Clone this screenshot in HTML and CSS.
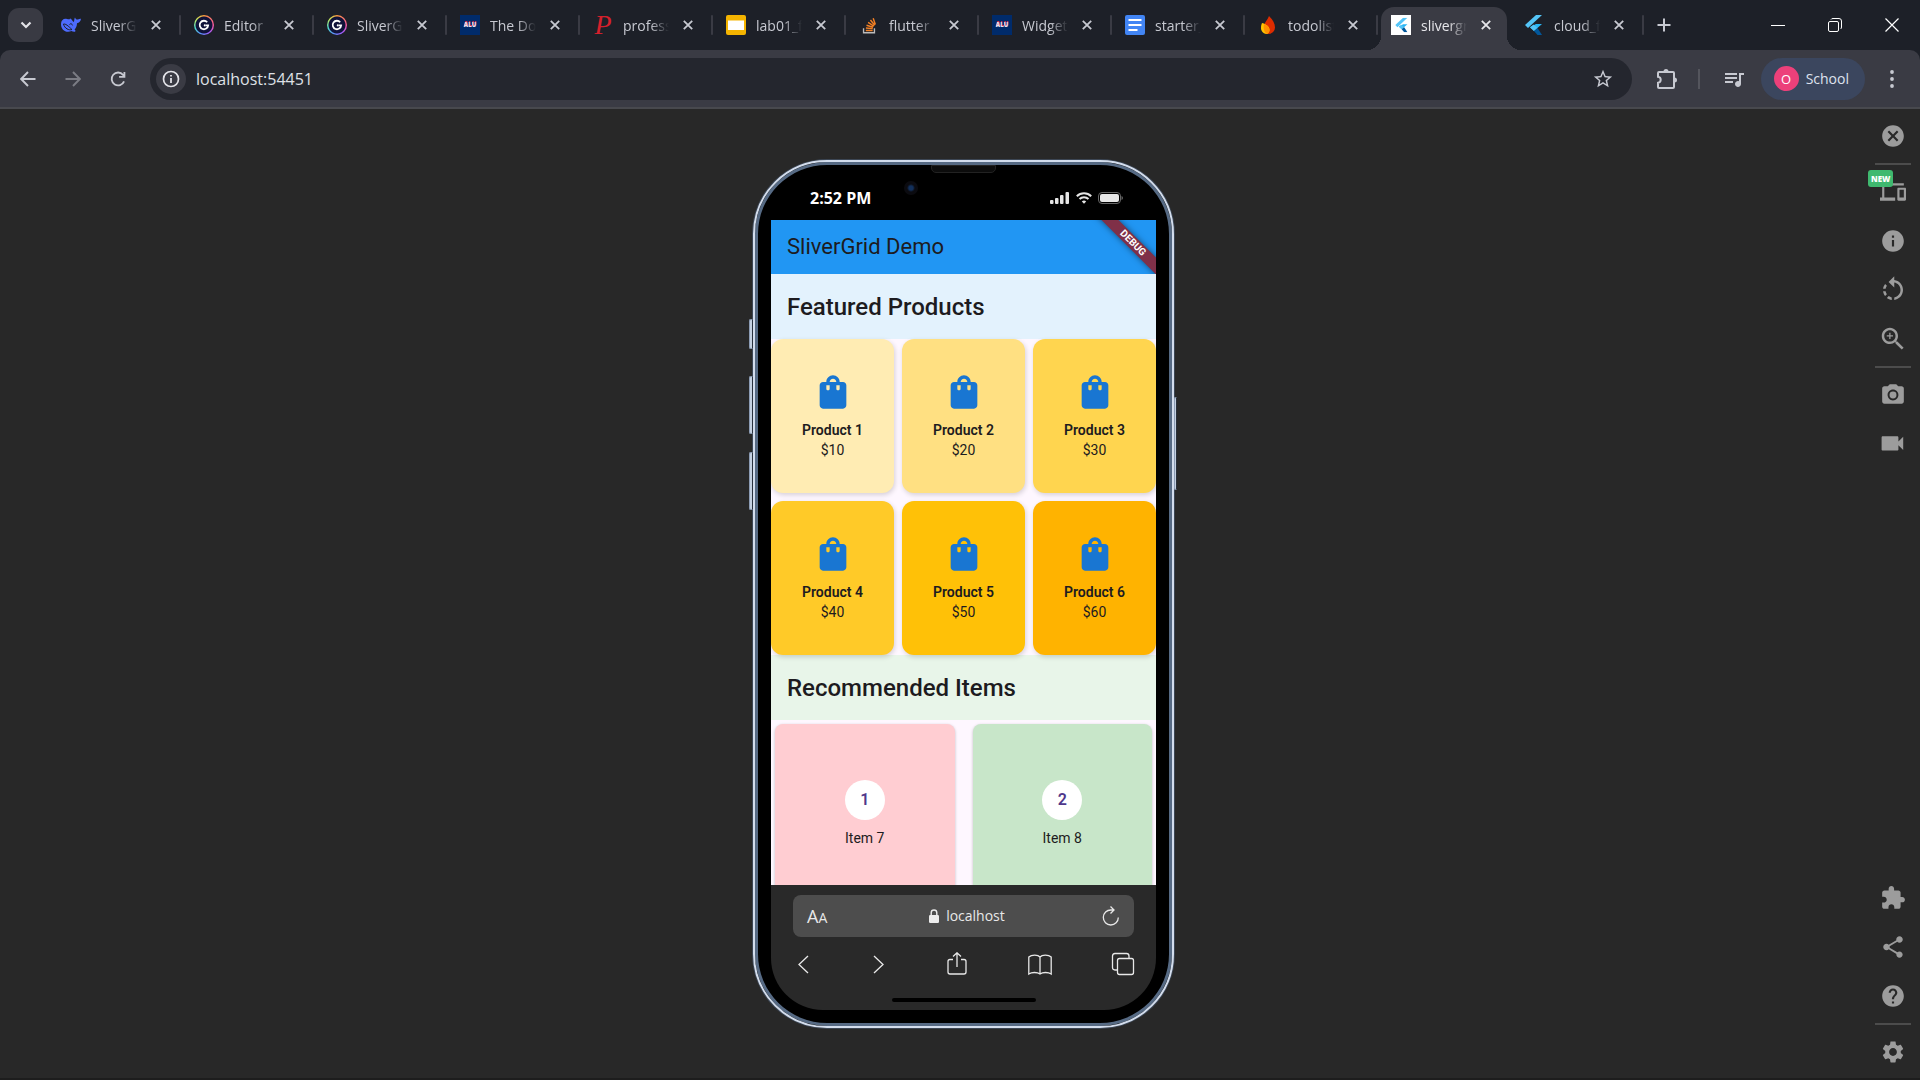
FILE: index.html
```html
<!DOCTYPE html>
<html lang="en">
<head>
<meta charset="utf-8">
<meta name="viewport" content="width=device-width, initial-scale=1">
<title>slivergrid_demo</title>
<link rel="stylesheet" href="styles.css">
</head>
<body>
<svg class="defs" aria-hidden="true">
  <symbol id="i-close" viewBox="0 0 10 10"><path d="M.8.8l8.4 8.4M9.2.8L.8 9.2" fill="none" stroke="currentColor" stroke-width="1.8"/></symbol>
  <symbol id="i-bag" viewBox="0 0 24 24"><path d="M18 6h-2c0-2.21-1.79-4-4-4S8 3.79 8 6H6c-1.1 0-2 .9-2 2v12c0 1.1.9 2 2 2h12c1.1 0 2-.9 2-2V8c0-1.1-.9-2-2-2zm-8 4c0 .55-.45 1-1 1s-1-.45-1-1V8h2v2zm2-6c1.1 0 2 .9 2 2h-4c0-1.1.9-2 2-2zm4 6c0 .55-.45 1-1 1s-1-.45-1-1V8h2v2z"/></symbol>
  <symbol id="i-flutter" viewBox="0 0 20 20"><path d="M12 0h6L4 13l-3-3z" fill="#54c5f8"/><path d="M12 9h6l-8 7-4-4z" fill="#29b6f6"/><path d="M6 12.5l3.500-3 4 3.500L10 16z" fill="#54c5f8"/><path d="M10 16l3.500-3L18 20h-4.500z" fill="#01579b"/></symbol>
</svg>

<header class="browser">
  <div class="tabstrip">
    <button class="tab-search" aria-label="Search tabs"><svg width="12" height="8" viewBox="0 0 12 8"><path d="M1.500 1.500L6 6l4.500-4.500" fill="none" stroke="currentColor" stroke-width="2.200"/></svg></button>
    <nav class="tabs" aria-label="Tabs">
      <div class="tab"><svg class="fav" viewBox="0 0 20 20"><path d="M0 9c0-4 3-6 6-5 2 .6 3 .4 3-.600 1 0 2 1.600 3.500 3.600C13.500 7 13 4 14 2.500c.5 1.500 1.500 2.300 3 2 .8-.4 1.800-1 3-.800-.3 2.500-1.800 4-4 4.500 0 3-1.200 5-2.500 6.300 1 .6 1.200 1.500.5 2.200-1.500.2-2.700-.2-3.500-.6C5 18.500 0 15 0 9z" fill="#4d6bfe"/><path d="M2.500 9c3-.5 7 4.500 8.500 5.500-3 1.200-7.500-1-8.500-5.500zM8.500 9.500c1-1.400 2.800-.6 3 .900" fill="none" stroke="#1d2028" stroke-width="1"/></svg><a class="title" href="#">SliverGrid</a><button class="x" aria-label="Close tab"><svg><use href="#i-close"/></svg></button></div>
      <div class="tab"><span class="fav ring"><svg viewBox="0 0 20 20"><path d="M14 6.600A5.300 5.300 0 1 0 15.200 10.500h-3" fill="none" stroke="#fff" stroke-width="2.200"/><circle cx="11" cy="10.500" r="1.300" fill="#fff"/></svg></span><a class="title" href="#">Editor | Gamma</a><button class="x" aria-label="Close tab"><svg><use href="#i-close"/></svg></button></div>
      <div class="tab"><span class="fav ring"><svg viewBox="0 0 20 20"><path d="M14 6.600A5.300 5.300 0 1 0 15.200 10.500h-3" fill="none" stroke="#fff" stroke-width="2.200"/><circle cx="11" cy="10.500" r="1.300" fill="#fff"/></svg></span><a class="title" href="#">SliverGrid</a><button class="x" aria-label="Close tab"><svg><use href="#i-close"/></svg></button></div>
      <div class="tab"><span class="fav alu">ALU</span><a class="title" href="#">The Docs</a><button class="x" aria-label="Close tab"><svg><use href="#i-close"/></svg></button></div>
      <div class="tab"><span class="fav pp">P</span><a class="title" href="#">professor</a><button class="x" aria-label="Close tab"><svg><use href="#i-close"/></svg></button></div>
      <div class="tab"><svg class="fav" viewBox="0 0 20 20"><rect width="20" height="20" rx="2" fill="#f5b400"/><rect x="2" y="5.500" width="16" height="9.500" fill="#fff"/></svg><a class="title" href="#">lab01_final</a><button class="x" aria-label="Close tab"><svg><use href="#i-close"/></svg></button></div>
      <div class="tab"><svg class="fav" viewBox="-1 -1 22 22" fill="none"><path d="M4 13.500v5h12v-5" stroke="#bcbbbb" stroke-width="1.500"/><path d="M6.500 16h7.500M6.600 13.200l7.500.8M7.300 10.300l7.200 2.200M9 7.200l6.300 4M11.600 4.500l4.700 5.700M14.600 2.500l2.400 7" stroke="#f48024" stroke-width="1.600"/></svg><a class="title" href="#">flutter</a><button class="x" aria-label="Close tab"><svg><use href="#i-close"/></svg></button></div>
      <div class="tab"><span class="fav alu">ALU</span><a class="title" href="#">Widgets</a><button class="x" aria-label="Close tab"><svg><use href="#i-close"/></svg></button></div>
      <div class="tab"><svg class="fav" viewBox="0 0 20 20"><rect width="20" height="20" rx="2" fill="#4285f4"/><path d="M3.500 5h13M3.500 10h13M3.500 15h9" stroke="#fff" stroke-width="2.200"/></svg><a class="title" href="#">starter_</a><button class="x" aria-label="Close tab"><svg><use href="#i-close"/></svg></button></div>
      <div class="tab"><svg class="fav" viewBox="0 0 20 20"><path d="M11 1c3 3 6 7 6 11.500A6.500 6.500 0 0 1 10.500 19C7 19 5 16 6 11c.6-4 3.600-6 5-10z" fill="#dd2c00"/><path d="M4 8c2 .4 7 2.500 7.500 6.500.2 2-1 4-3 4.500-4-.6-5.500-3.500-5.500-6C3 11 3.300 9.500 4 8z" fill="#ffc400"/><path d="M6 9c3.500 1 6 4 5.500 7-.3 1.300-1 2.300-2 3C6 18 5 13 6 9z" fill="#ff9100"/></svg><a class="title" href="#">todolist</a><button class="x" aria-label="Close tab"><svg><use href="#i-close"/></svg></button></div>
      <div class="tab active"><svg class="fav white" viewBox="-5 -4 28 28"><use href="#i-flutter" width="20" height="20"/></svg><a class="title" href="#" aria-current="page">slivergrid</a><button class="x" aria-label="Close tab"><svg><use href="#i-close"/></svg></button></div>
      <div class="tab"><svg class="fav" viewBox="0 0 20 20"><use href="#i-flutter" width="20" height="20"/></svg><a class="title" href="#">cloud_firestore</a><button class="x" aria-label="Close tab"><svg><use href="#i-close"/></svg></button></div>
    </nav>
    <button class="new-tab" aria-label="New tab"><svg width="14" height="14" viewBox="0 0 14 14"><path d="M7 .5v13M.5 7h13" stroke="currentColor" stroke-width="2"/></svg></button>
    <div class="window-controls">
      <button aria-label="Minimize"><svg width="14" height="14" viewBox="0 0 14 14"><path d="M0 7.500h14" stroke="currentColor"/></svg></button>
      <button aria-label="Restore"><svg width="14" height="14" viewBox="0 0 14 14" fill="none" stroke="currentColor"><rect x=".5" y="3.500" width="10" height="10" rx="1.500"/><path d="M3 1.500Q3.500.5 5 .5h6Q13.500.5 13.500 3v6q0 1.500-1 2"/></svg></button>
      <button aria-label="Close"><svg width="14" height="14" viewBox="0 0 14 14"><path d="M.5.5l13 13M13.500.5l-13 13" stroke="currentColor" stroke-width="1.200"/></svg></button>
    </div>
  </div>
  <div class="toolbar">
    <button class="tool" aria-label="Back"><svg width="16" height="16" viewBox="0 0 16 16"><path d="M15.500 8H1.500M8 1L1.200 8 8 15" fill="none" stroke="currentColor" stroke-width="1.900"/></svg></button>
    <button class="tool dim" aria-label="Forward"><svg width="16" height="16" viewBox="0 0 16 16"><path d="M.5 8h14M8 1l6.800 7L8 15" fill="none" stroke="currentColor" stroke-width="1.900"/></svg></button>
    <button class="tool" aria-label="Reload"><svg width="22" height="22" viewBox="0 0 24 24"><path d="M18.600 14.500A7 7 0 1 1 17.500 7.500L19 9.300M19 4.300v5.400h-5.800" fill="none" stroke="currentColor" stroke-width="2"/></svg></button>
    <div class="omnibox">
      <button class="site-info" aria-label="Site information"><svg width="18" height="18" viewBox="0 0 18 18"><circle cx="9" cy="9" r="7.500" fill="none" stroke="currentColor" stroke-width="1.700"/><path d="M9 8v5M9 5v1.600" stroke="currentColor" stroke-width="1.800"/></svg></button>
      <input type="text" value="localhost:54451" aria-label="Address bar">
      <button class="star" aria-label="Bookmark"><svg width="22" height="22" viewBox="0 0 24 24" fill="currentColor"><path d="M22 9.240l-7.190-.62L12 2 9.190 8.630 2 9.240l5.460 4.730L5.820 21 12 17.270 18.180 21l-1.630-7.030L22 9.240zM12 15.400l-3.760 2.270 1-4.280-3.320-2.880 4.380-.38L12 6.100l1.710 4.040 4.380.38-3.320 2.880 1 4.280L12 15.400z"/></svg></button>
    </div>
    <button class="tool ext" aria-label="Extensions"><svg width="22" height="22" viewBox="0 0 22 22"><path d="M3 4h14q1 0 1 1v14q0 1-1 1H3q-1 0-1-1v-4.200c3.600-.4 3.600-5.600 0-6V5q0-1 1-1z" fill="none" stroke="currentColor" stroke-width="2"/><path d="M7.500 3.500a2.500 2.500 0 0 1 5 0zM18.500 9.500a2.500 2.500 0 0 1 0 5z" fill="currentColor"/></svg></button>
    <span class="divider"></span>
    <button class="tool" aria-label="Media controls"><svg width="24" height="24" viewBox="0 0 24 24" fill="currentColor"><path d="M15 6H3v2h12V6zm0 4H3v2h12v-2zM3 16h8v-2H3v2zM17 6v8.180c-.31-.11-.65-.18-1-.18-1.660 0-3 1.340-3 3s1.340 3 3 3 3-1.340 3-3V8h3V6h-5z"/></svg></button>
    <button class="profile"><span class="avatar">O</span>School</button>
    <button class="menu" aria-label="Menu"><svg width="4" height="18" viewBox="0 0 4 18" fill="currentColor"><circle cx="2" cy="2" r="1.900"/><circle cx="2" cy="9" r="1.900"/><circle cx="2" cy="16" r="1.900"/></svg></button>
  </div>
</header>

<main class="stage">
  <div class="phone">
    <span class="key mute"></span><span class="key up"></span><span class="key down"></span><span class="key power"></span>
    <span class="speaker"></span><span class="camera"></span>
    <div class="status">
      <time>2:52 PM</time>
      <svg width="20" height="14" viewBox="0 0 20 14" fill="#e6e6e6"><rect x="0" y="9" width="3.500" height="4" rx="1"/><rect x="5" y="7" width="3.500" height="6" rx="1"/><rect x="10" y="4" width="3.500" height="9" rx="1"/><rect x="15.500" y="1" width="3.500" height="12" rx="1"/></svg>
      <svg width="16" height="12" viewBox="0 0 16 12" fill="none" stroke="#e6e6e6" stroke-width="2"><path d="M.8 4.200a10.200 10.200 0 0 1 14.400 0M3.500 7a6.400 6.400 0 0 1 9 0"/><path d="M8 11.800L5.800 9.600a3.200 3.200 0 0 1 4.400 0z" fill="#e6e6e6" stroke="none"/></svg>
      <svg width="25" height="12" viewBox="0 0 25 12"><rect x=".5" y=".5" width="22" height="11" rx="3.500" fill="none" stroke="#666"/><rect x="2" y="2" width="19" height="8" rx="2" fill="#e8e8e8"/><path d="M23.500 4v4q1.500-.5 1.500-2t-1.500-2z" fill="#666"/></svg>
    </div>
    <div class="screen">
      <div class="app">
        <div class="appbar"><h1>SliverGrid Demo</h1><span class="debug">DEBUG</span></div>
        <h2 class="featured">Featured Products</h2>
        <div class="products">
          <article class="product a1"><svg><use href="#i-bag"/></svg><strong>Product 1</strong><span>$10</span></article>
          <article class="product a2"><svg><use href="#i-bag"/></svg><strong>Product 2</strong><span>$20</span></article>
          <article class="product a3"><svg><use href="#i-bag"/></svg><strong>Product 3</strong><span>$30</span></article>
          <article class="product a4"><svg><use href="#i-bag"/></svg><strong>Product 4</strong><span>$40</span></article>
          <article class="product a5"><svg><use href="#i-bag"/></svg><strong>Product 5</strong><span>$50</span></article>
          <article class="product a6"><svg><use href="#i-bag"/></svg><strong>Product 6</strong><span>$60</span></article>
        </div>
        <h2 class="recommended">Recommended Items</h2>
        <div class="items">
          <article class="item red"><b>1</b><span>Item 7</span></article>
          <article class="item green"><b>2</b><span>Item 8</span></article>
        </div>
      </div>
      <div class="safari">
        <div class="address">
          <button class="aa" aria-label="Text size">A<small>A</small></button>
          <label class="host"><svg width="10" height="14" viewBox="0 0 10 14"><path d="M2.200 7V3.800a2.800 2.800 0 0 1 5.600 0V7" fill="none" stroke="#ececec" stroke-width="1.400"/><rect y="6" width="10" height="8" rx="1.200" fill="#ececec"/></svg><input type="text" value="localhost" aria-label="Address"></label>
          <button aria-label="Reload"><svg width="18" height="20" viewBox="0 0 18 20" fill="none" stroke="currentColor" stroke-width="1.300"><path d="M16.300 11.500A7.500 7.500 0 1 1 9 4h3M8.500.5L12 4 8.500 7.500"/></svg></button>
        </div>
        <div class="nav">
          <button class="arrow" aria-label="Back"><svg width="24" height="24" viewBox="0 0 24 24"><path d="M16 4l-9 8.500 9 8.500"/></svg></button>
          <button class="arrow" aria-label="Forward"><svg width="24" height="24" viewBox="0 0 24 24"><path d="M8 4l9 8.500L8 21"/></svg></button>
          <button aria-label="Share"><svg width="24" height="24" viewBox="0 0 24 24"><path d="M8 7.500H5q-2 0-2 2V20q0 2 2 2h14q2 0 2-2V9.500q0-2-2-2h-3M12 15V1M8 4.500L12 .8l4 3.700"/></svg></button>
          <button aria-label="Bookmarks"><svg width="24" height="24" viewBox="0 0 24 24"><path d="M12 5C10 2.500 3.500 2.500.8 5v17c3-2 8.500-2 11.200 0 2.700-2 8.200-2 11.200 0V5C20.500 2.500 14 2.500 12 5zV22"/></svg></button>
          <button aria-label="Tabs"><svg width="24" height="24" viewBox="0 0 24 24"><rect x="6.500" y="6.500" width="16" height="16" rx="2"/><path d="M6.500 18H4q-2.500 0-2.500-2.500V4Q1.500 1.500 4 1.500h11.500Q18 1.500 18 4v2.500"/></svg></button>
        </div>
        <span class="home"></span>
      </div>
    </div>
  </div>

  <aside class="rail">
    <button aria-label="Close"><svg viewBox="0 0 24 24"><path d="M12 2C6.470 2 2 6.470 2 12s4.470 10 10 10 10-4.470 10-10S17.530 2 12 2zm5 13.590L15.590 17 12 13.410 8.410 17 7 15.590 10.590 12 7 8.410 8.410 7 12 10.590 15.590 7 17 8.410 13.410 12 17 15.590z"/></svg></button>
    <hr>
    <button aria-label="Devices"><svg viewBox="0 0 24 24"><path d="M4 6h18V4H4c-1.100 0-2 .9-2 2v11H0v3h14v-3H4V6zm19 2h-6c-.55 0-1 .45-1 1v10c0 .55.45 1 1 1h6c.55 0 1-.45 1-1V9c0-.55-.45-1-1-1zm-1 9h-4v-7h4v7z"/></svg><span class="new">NEW</span></button>
    <button aria-label="Info"><svg viewBox="0 0 24 24"><path d="M12 2C6.480 2 2 6.480 2 12s4.480 10 10 10 10-4.480 10-10S17.520 2 12 2zm1 15h-2v-6h2v6zm0-8h-2V7h2v2z"/></svg></button>
    <button aria-label="Rotate"><svg class="big" viewBox="0 0 24 24"><path d="M7.110 8.530L5.700 7.110C4.800 8.270 4.240 9.610 4.070 11h2.020c.14-.87.49-1.720 1.020-2.470zM6.090 13H4.070c.17 1.390.72 2.730 1.620 3.890l1.410-1.420c-.52-.75-.87-1.590-1.010-2.470zm1.010 5.320c1.160.9 2.510 1.440 3.900 1.610V17.900c-.87-.15-1.710-.49-2.460-1.030L7.100 18.320zM13 4.070V1L8.450 5.550 13 10V6.090c2.840.48 5 2.940 5 5.910s-2.160 5.430-5 5.910v2.020c3.950-.49 7-3.850 7-7.930s-3.050-7.440-7-7.930z"/></svg></button>
    <button aria-label="Zoom in"><svg class="big" viewBox="0 0 24 24"><path d="M15.500 14h-.79l-.28-.27C15.410 12.590 16 11.110 16 9.500 16 5.910 13.090 3 9.500 3S3 5.910 3 9.500 5.910 16 9.500 16c1.610 0 3.090-.59 4.230-1.570l.27.28v.79l5 4.990L20.490 19l-4.990-5zm-6 0C7.010 14 5 11.990 5 9.500S7.010 5 9.500 5 14 7.010 14 9.500 11.990 14 9.500 14zm2.500-4h-2v2H9v-2H7V9h2V7h1v2h2v1z"/></svg></button>
    <hr>
    <button aria-label="Screenshot"><svg viewBox="0 0 24 24"><circle cx="12" cy="12" r="3.200"/><path d="M9 2L7.170 4H4c-1.100 0-2 .9-2 2v12c0 1.100.9 2 2 2h16c1.100 0 2-.9 2-2V6c0-1.100-.9-2-2-2h-3.170L15 2H9zm3 15c-2.760 0-5-2.240-5-5s2.240-5 5-5 5 2.240 5 5-2.240 5-5 5z"/></svg></button>
    <button aria-label="Record"><svg class="big" viewBox="0 0 25 25"><path d="M17 10.500V7c0-.55-.45-1-1-1H4c-.55 0-1 .45-1 1v10c0 .55.45 1 1 1h12c.55 0 1-.45 1-1v-3.500l4 4v-11l-4 4z"/></svg></button>
    <button class="push" aria-label="Extensions"><svg viewBox="0 0 24 24"><path d="M20.500 11H19V7c0-1.100-.9-2-2-2h-4V3.500C13 2.120 11.880 1 10.500 1S8 2.120 8 3.500V5H4c-1.100 0-1.990.9-1.990 2v3.800H3.500c1.490 0 2.700 1.210 2.700 2.700s-1.210 2.700-2.700 2.700H2V20c0 1.100.9 2 2 2h3.800v-1.500c0-1.490 1.210-2.700 2.700-2.700 1.490 0 2.700 1.210 2.700 2.700V22H17c1.100 0 2-.9 2-2v-4h1.500c1.380 0 2.500-1.120 2.500-2.500S21.880 11 20.500 11z"/></svg></button>
    <button aria-label="Share"><svg viewBox="0 0 24 24"><path d="M18 16.080c-.76 0-1.440.3-1.960.77L8.910 12.700c.05-.23.09-.46.09-.7s-.04-.47-.09-.7l7.050-4.110c.54.5 1.250.81 2.040.81 1.660 0 3-1.340 3-3s-1.340-3-3-3-3 1.340-3 3c0 .24.04.47.09.7L8.040 9.810C7.500 9.310 6.790 9 6 9c-1.660 0-3 1.340-3 3s1.340 3 3 3c.79 0 1.500-.31 2.040-.81l7.120 4.160c-.05.21-.08.43-.08.65 0 1.610 1.310 2.920 2.920 2.920 1.610 0 2.920-1.310 2.920-2.920s-1.310-2.920-2.920-2.920z"/></svg></button>
    <button aria-label="Help"><svg viewBox="0 0 24 24"><path d="M12 2C6.480 2 2 6.480 2 12s4.480 10 10 10 10-4.480 10-10S17.520 2 12 2zm1 17h-2v-2h2v2zm2.070-7.750l-.9.920C13.450 12.900 13 13.500 13 15h-2v-.5c0-1.100.45-2.100 1.170-2.830l1.240-1.260c.37-.36.59-.86.59-1.410 0-1.100-.9-2-2-2s-2 .9-2 2H8c0-2.210 1.790-4 4-4s4 1.790 4 4c0 .88-.36 1.680-.93 2.250z"/></svg></button>
    <hr>
    <button aria-label="Settings"><svg viewBox="0 0 24 24"><path d="M19.140 12.940c.04-.3.06-.61.06-.94 0-.32-.02-.64-.07-.94l2.030-1.580c.18-.14.23-.41.12-.61l-1.920-3.320c-.12-.22-.37-.29-.59-.22l-2.390.96c-.5-.38-1.030-.7-1.620-.94L14.400 2.810c-.04-.24-.24-.41-.48-.41h-3.840c-.24 0-.43.17-.47.41L9.250 5.350C8.660 5.590 8.120 5.920 7.630 6.290L5.240 5.330c-.22-.08-.47 0-.59.22L2.740 8.870c-.12.21-.08.47.12.61l2.030 1.580c-.05.3-.09.63-.09.94s.02.64.07.94l-2.030 1.580c-.18.14-.23.41-.12.61l1.920 3.320c.12.22.37.29.59.22l2.390-.96c.5.38 1.030.7 1.620.94l.36 2.540c.05.24.24.41.48.41h3.840c.24 0 .44-.17.47-.41l.36-2.540c.59-.24 1.130-.56 1.620-.94l2.390.96c.22.08.47 0 .59-.22l1.920-3.320c.12-.22.07-.47-.12-.61l-2.010-1.580zM12 15.600c-1.980 0-3.600-1.620-3.600-3.600s1.620-3.600 3.600-3.600 3.600 1.620 3.600 3.600-1.620 3.600-3.600 3.600z"/></svg></button>
  </aside>
</main>
</body>
</html>
```
FILE: styles.css
```css
* { box-sizing: border-box; }
body {
  margin: 0;
  min-height: 100vh;
  display: flex;
  flex-direction: column;
  background: #282828;
  font-family: "Open Sans", "Noto Sans", sans-serif;
  color: #c7c9d1;
}
h1, h2 { margin: 0; }
button {
  display: flex;
  align-items: center;
  justify-content: center;
  flex: none;
  padding: 0;
  border: 0;
  background: none;
  color: inherit;
  font: inherit;
}
input { border: 0; padding: 0; background: none; color: inherit; font: inherit; outline: 0; }
a { color: inherit; text-decoration: none; }
svg { display: block; flex: none; }
.defs { position: absolute; width: 0; height: 0; }

/* Browser chrome */
.browser { background: #1d2028; }
.tabstrip { display: flex; align-items: center; height: 50px; padding-left: 8px; }
.tab-search { width: 35px; height: 34px; margin-right: 5px; border-radius: 11px; background: #393a43; color: #e3e3e8; }
.tabs { display: flex; flex: 0 1 1596px; height: 50px; min-width: 0; }
.tab { display: flex; align-items: center; flex: 0 1 133px; min-width: 0; padding-left: 13px; font-size: 14px; }
.tab::after { content: ""; flex: none; width: 2px; height: 20px; margin-left: auto; border-radius: 1px; background: #3a3b44; }
.fav { flex: none; width: 20px; height: 20px; }
.title {
  flex: 0 1 46px;
  min-width: 0;
  margin: 0 9px 0 10px;
  padding-top: 1px;
  overflow: hidden;
  white-space: nowrap;
  line-height: 20px;
  -webkit-mask-image: linear-gradient(90deg, #000 60%, transparent);
  mask-image: linear-gradient(90deg, #000 60%, transparent);
}
.x { width: 20px; height: 20px; }
.x svg { width: 10px; height: 10px; }
.ring {
  padding: 2px;
  border-radius: 50%;
  background: radial-gradient(circle, #10133a 8px, transparent 9px), conic-gradient(#ff9a3d, #ff5aa0 25%, #a45cff 40%, #5c8dff 55%, #4fe0d0 70%, #c8f060 85%, #ff9a3d);
}
.ring svg { width: 16px; height: 16px; }
.alu { display: grid; place-items: center; background: #002b6b; color: #e8e0f0; font-size: 6px; font-weight: 800; line-height: 8px; text-shadow: 0 -1px #e0304a; }
.pp { display: grid; place-items: center; color: #d5202c; font: italic 400 28px/20px "Liberation Serif", serif; }
.white { background: #fff; }
.tab.active { position: relative; flex-basis: 126px; margin: 7px 4px 0 3px; padding: 0 0 7px 10px; border-radius: 13px 13px 0 0; background: #3a3b44; color: #e6e6ea; }
.tab.active::before, .tab.active::after { content: ""; position: absolute; bottom: 0; width: 14px; height: 14px; margin: 0; border-radius: 0; }
.tab.active::before { right: 100%; background: radial-gradient(circle at 0 0, transparent 14px, #3a3b44 14px); }
.tab.active::after { left: 100%; background: radial-gradient(circle at 100% 0, transparent 14px, #3a3b44 14px); }
.new-tab { width: 34px; height: 34px; margin-left: 3px; }
.window-controls { display: flex; margin-left: auto; color: #fff; }
.window-controls button { width: 57px; height: 48px; }

.toolbar { display: flex; align-items: center; height: 59px; padding: 0 16px 0 8px; border-bottom: 2px solid #48494e; border-radius: 10px 10px 0 0; background: #3a3b44; }
.tool { width: 40px; height: 40px; margin-right: 5px; }
.dim { color: #7b7c84; }
.omnibox { display: flex; align-items: center; flex: 1; height: 42px; min-width: 0; margin-left: 7px; padding: 0 18px 0 6px; border-radius: 21px; background: #24262e; }
.site-info { width: 30px; height: 30px; margin-right: 10px; border-radius: 50%; background: #3a3b44; color: #e3e3e8; }
.omnibox input { flex: 1; min-width: 0; height: 30px; font-size: 16px; color: #dfe0e6; }
.ext { margin: 0 11px 0 15px; }
.divider { width: 2px; height: 20px; margin-right: 14px; background: #54555d; }
.profile { gap: 7px; height: 42px; margin-left: 2px; padding: 0 16px 0 13px; border-radius: 21px; background: #3b465e; color: #dfe2ee; font-size: 14px; }
.avatar { display: grid; place-items: center; width: 25px; height: 25px; border-radius: 50%; background: #ec407a; color: #fff; font-size: 13px; }
.menu { width: 25px; height: 40px; margin-left: 14px; }

/* Simulator stage */
.stage { display: flex; flex: 1; align-items: center; padding-left: 61px; border-bottom: 2px solid #1d1d1d; }
.phone {
  position: relative;
  width: 421px;
  margin: 0 auto;
  padding: 0 16px 16px;
  border: 2px solid #d3dded;
  border-radius: 74px;
  background: #000;
  box-shadow: inset 0 0 0 3px #566a84, 0 0 0 1px #3c4654;
}
.key { position: absolute; left: -6px; width: 4px; border: 1px solid #8b9bb3; border-right: 1px solid #28303c; border-radius: 2px 0 0 2px; background: #c3cfe0; }
.mute { top: 157px; height: 30px; }
.up { top: 214px; height: 58px; }
.down { top: 290px; height: 58px; }
.power { top: 235px; left: auto; right: -5px; width: 3px; height: 93px; }
.speaker { position: absolute; top: 3px; left: 176px; width: 65px; height: 8px; border: 1px solid #222; border-radius: 0 0 5px 5px; background: #0c0c0c; }
.camera { position: absolute; top: 19px; left: 149px; width: 14px; height: 14px; border-radius: 50%; background: radial-gradient(circle, #12305c 2px, #0b0b10 4px); }
.status { display: flex; align-items: center; gap: 6px; height: 58px; padding: 14px 33px 0 39px; }
.status time { margin-right: auto; color: #fff; font-size: 16px; font-weight: 700; }
.screen { overflow: hidden; border-radius: 0 0 52px 52px; background: #292929; }
.app { height: 665px; overflow: hidden; background: #fef7ff; color: #1d1b20; font-family: Roboto, sans-serif; font-size: 14px; line-height: 20px; }
.appbar { position: relative; display: flex; align-items: center; height: 54px; padding: 0 16px; overflow: hidden; background: #2196f3; }
.appbar h1 { font-size: 22px; font-weight: 400; line-height: 28px; }
.debug { position: absolute; top: 17px; right: -37px; width: 120px; height: 12px; background: #7f3048; box-shadow: 0 0 6px rgba(0, 0, 0, .5); color: #fff; font-size: 10px; font-weight: 700; line-height: 12px; text-align: center; transform: rotate(45deg); }
h2 { padding: 17px 16px 16px; font-size: 24px; font-weight: 500; line-height: 32px; }
.featured { background: #e3f2fd; }
.recommended { background: #e8f5e9; }
.products { display: grid; grid-template-columns: repeat(3, 1fr); gap: 8px; position: relative; }
.product { display: flex; flex-direction: column; align-items: center; justify-content: center; height: 154px; border-radius: 12px; box-shadow: 1px 2px 5px rgba(0, 0, 0, .16); }
.product svg { width: 40px; height: 40px; margin-bottom: 8px; fill: #1976d2; }
strong { font-weight: 600; }
.a1 { background: #ffecb3; }
.a2 { background: #ffe082; }
.a3 { background: #ffd54f; }
.a4 { background: #ffca28; }
.a5 { background: #ffc107; }
.a6 { background: #ffb300; }
.items { display: grid; grid-template-columns: 1fr 1fr; gap: 18px; padding: 4px; }
.item { display: flex; flex-direction: column; align-items: center; justify-content: center; gap: 8px; height: 181px; border-radius: 8px; box-shadow: 0 1px 3px rgba(0, 0, 0, .25); }
.item b { width: 40px; height: 40px; border-radius: 50%; background: #fff; color: #4f378b; font-size: 16px; font-weight: 600; line-height: 40px; text-align: center; }
.red { background: #ffcdd2; }
.green { background: #c8e6c9; }

.safari { display: flex; flex-direction: column; height: 125px; padding: 10px 22px 8px; color: #e8e8e8; }
.address { display: flex; align-items: center; justify-content: space-between; height: 42px; padding: 0 14px; border-radius: 8px; background: #4d4d4d; font-size: 14px; }
.aa { align-items: baseline; font-size: 18px; }
.aa small { font-size: 14px; }
.host { display: flex; align-items: center; gap: 7px; padding-left: 10px; }
.host input { width: 64px; }
.nav { display: flex; justify-content: space-between; margin-top: 15px; padding: 0 1px 0 4px; }
.nav button { width: 21px; }
.nav .arrow { width: 13px; }
.nav svg { fill: none; stroke: currentColor; stroke-width: 1.3; }
.home { width: 144px; height: 4px; margin: auto auto 0; border-radius: 2px; background: #000; }

/* Simulator tools */
.rail { display: flex; flex-direction: column; align-self: stretch; align-items: center; width: 54px; padding: 2px 0; }
.rail button { position: relative; width: 54px; height: 49px; }
.rail svg { width: 26px; height: 26px; fill: #9c9c9c; }
.rail svg.big { width: 30px; height: 30px; }
.rail hr { width: 36px; height: 2px; margin: 3px 0 2px; border: 0; background: #4c4c4c; }
.rail .push { margin-top: auto; }
.new { position: absolute; top: 3px; left: 2px; padding: 0 3px; border-radius: 3px; background: #3fb96f; color: #fff; font-size: 8px; font-weight: 800; line-height: 17px; }
```
